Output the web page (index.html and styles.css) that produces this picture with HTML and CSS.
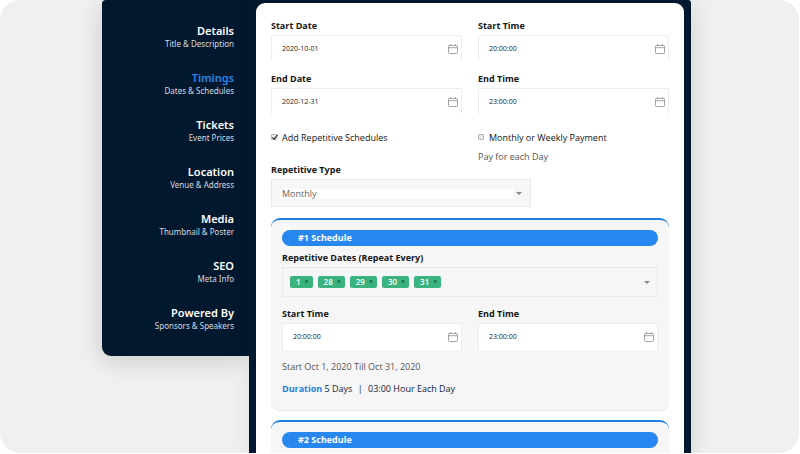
FILE: index.html
```html
<!DOCTYPE html>
<html lang="en">
<head>
<meta charset="utf-8">
<title>Event Timings</title>
<link rel="stylesheet" href="styles.css">
</head>
<body>
<svg class="sprite" aria-hidden="true">
  <symbol id="calendar" viewBox="0 0 10 10">
    <path d="M1.5 1.5h7a1 1 0 0 1 1 1v6a1 1 0 0 1-1 1h-7a1 1 0 0 1-1-1v-6a1 1 0 0 1 1-1zM.5 3.7h9M2.6 0v1.8M7.4 0v1.8" fill="none" stroke="currentColor" stroke-width=".8"/>
  </symbol>
</svg>
<div class="scene">
  <nav class="steps">
    <a href="#details" class="step"><span class="step-title">Details</span><span class="step-note">Title &amp; Description</span></a>
    <a href="#timings" class="step active"><span class="step-title">Timings</span><span class="step-note">Dates &amp; Schedules</span></a>
    <a href="#tickets" class="step"><span class="step-title">Tickets</span><span class="step-note">Event Prices</span></a>
    <a href="#location" class="step"><span class="step-title">Location</span><span class="step-note">Venue &amp; Address</span></a>
    <a href="#media" class="step"><span class="step-title">Media</span><span class="step-note">Thumbnail &amp; Poster</span></a>
    <a href="#seo" class="step"><span class="step-title">SEO</span><span class="step-note">Meta Info</span></a>
    <a href="#powered" class="step"><span class="step-title">Powered By</span><span class="step-note">Sponsors &amp; Speakers</span></a>
  </nav>
  <main class="frame">
    <form class="panel">
      <div class="pair">
        <div class="field">
          <label for="start-date">Start Date</label>
          <div class="box"><input id="start-date" type="text" value="2020-10-01"><svg class="cal"><use href="#calendar"/></svg></div>
        </div>
        <div class="field">
          <label for="start-time">Start Time</label>
          <div class="box"><input id="start-time" type="text" value="20:00:00"><svg class="cal"><use href="#calendar"/></svg></div>
        </div>
        <div class="field">
          <label for="end-date">End Date</label>
          <div class="box"><input id="end-date" type="text" value="2020-12-31"><svg class="cal"><use href="#calendar"/></svg></div>
        </div>
        <div class="field">
          <label for="end-time">End Time</label>
          <div class="box"><input id="end-time" type="text" value="23:00:00"><svg class="cal"><use href="#calendar"/></svg></div>
        </div>
      </div>
      <div class="pair options">
        <label class="check"><input type="checkbox" checked>Add Repetitive Schedules</label>
        <div>
          <label class="check"><input type="checkbox">Monthly or Weekly Payment</label>
          <p class="hint">Pay for each Day</p>
        </div>
      </div>
      <div class="field type">
        <label for="type">Repetitive Type</label>
        <div class="select-box"><select id="type"><option>Monthly</option></select></div>
      </div>
      <section class="card">
        <h2>#1 Schedule</h2>
        <div class="field">
          <label id="dates-label">Repetitive Dates (Repeat Every)</label>
          <div class="tags" role="group" aria-labelledby="dates-label">
            <span class="tag">1<button type="button" aria-label="Remove 1">×</button></span>
            <span class="tag">28<button type="button" aria-label="Remove 28">×</button></span>
            <span class="tag">29<button type="button" aria-label="Remove 29">×</button></span>
            <span class="tag">30<button type="button" aria-label="Remove 30">×</button></span>
            <span class="tag">31<button type="button" aria-label="Remove 31">×</button></span>
          </div>
        </div>
        <div class="pair times">
          <div class="field">
            <label for="s1-start">Start Time</label>
            <div class="box"><input id="s1-start" type="text" value="20:00:00"><svg class="cal"><use href="#calendar"/></svg></div>
          </div>
          <div class="field">
            <label for="s1-end">End Time</label>
            <div class="box"><input id="s1-end" type="text" value="23:00:00"><svg class="cal"><use href="#calendar"/></svg></div>
          </div>
        </div>
        <p class="range">Start Oct 1, 2020 Till Oct 31, 2020</p>
        <p class="summary"><strong>Duration</strong> 5 Days <span class="bar">|</span> 03:00 Hour Each Day</p>
      </section>
      <section class="card">
        <h2>#2 Schedule</h2>
      </section>
    </form>
  </main>
</div>
</body>
</html>
```
FILE: styles.css
```css
* { box-sizing: border-box; }
body {
  margin: 0;
  background: #fff;
  color: #151515;
  font: 9px/14px "Open Sans", sans-serif;
}
p, h2 { margin: 0; }
.sprite { display: none; }
.scene {
  display: flex;
  align-items: flex-start;
  height: calc(100vh - 1px);
  margin-right: 1px;
  padding: 0 108px 0 102px;
  overflow: hidden;
  border-radius: 20px;
  background: #f0f0f0;
}
.steps {
  display: flex;
  flex: 0 0 147px;
  flex-direction: column;
  gap: 21px;
  padding: 23px 15px 25px 0;
  border-radius: 4px 0 0 9px;
  background: #02182e;
  box-shadow: -2px 6px 22px rgba(0, 0, 0, .14);
  font-family: "Noto Sans", sans-serif;
  text-align: right;
}
.step { color: #fff; text-decoration: none; }
.step-title {
  display: block;
  font-size: 11px;
  font-weight: 600;
  line-height: 15px;
}
.active .step-title { color: #2b86e8; }
.step-note {
  display: block;
  color: #d5dbe2;
  font-size: 8px;
  line-height: 11px;
}
.frame {
  flex: 1;
  height: 100%;
  padding: 3px 7px 0;
  border-radius: 0 3px 0 0;
  background: #02182e;
  box-shadow: 4px 6px 22px rgba(0, 0, 0, .1);
}
.panel {
  height: 100%;
  padding: 16px 15px 0;
  overflow: hidden;
  border-radius: 9px 9px 0 0;
  background: #fff;
}
.pair {
  display: grid;
  grid-template-columns: 1fr 1fr;
  gap: 11px 16px;
}
.field > label {
  display: block;
  margin-bottom: 2px;
  font-weight: 700;
}
.box {
  display: flex;
  align-items: center;
  height: 26px;
  padding-right: 3px;
  border: 1px solid #ededed;
  border-bottom: 0;
  border-radius: 2px 2px 0 0;
  background: #fff;
}
.box input {
  flex: 1;
  min-width: 0;
  padding: 0 0 0 10px;
  border: 0;
  background: none;
  color: #222;
  font: 7px/14px "Open Sans", sans-serif;
}
.cal { width: 10px; height: 10px; color: #8c8c8c; }
.options { margin-top: 17px; height: 32px; }
.check { display: flex; gap: 5px; align-items: flex-start; }
.check input {
  appearance: none;
  width: 6px;
  height: 6px;
  margin: 3px 0 0;
  border: 1px solid #b5b5b5;
  border-radius: 1px;
  background: #e9e9e9;
}
.check input:checked::before {
  content: "";
  display: block;
  width: 5px;
  height: 2px;
  border: solid #222;
  border-width: 0 0 1px 1px;
  transform: rotate(-50deg);
}
.hint { margin-top: 5px; color: #555; }
.type { width: 260px; }
.select-box {
  position: relative;
  height: 28px;
  padding: 9px 16px 8px 8px;
  border: 1px solid #e9e9e9;
  background: #f7f7f7;
}
.select-box select {
  appearance: none;
  display: block;
  width: 100%;
  height: 10px;
  padding: 0 2px;
  border: 0;
  background: #fff;
  color: #666;
  font: 9px/10px "Open Sans", sans-serif;
}
.select-box::after, .tags::after {
  content: "";
  width: 0;
  height: 0;
  border: 3px solid transparent;
  border-top-color: #888;
  border-bottom: 0;
}
.select-box::after { position: absolute; top: 12px; right: 8px; }
.card {
  margin-top: 11px;
  padding: 10px 11px 14px;
  border-top: 2px solid #1f7fe0;
  border-radius: 9px;
  background: #f6f6f6;
  box-shadow: 0 1px 1px rgba(0, 0, 0, .1);
}
.card + .card { margin-top: 10px; padding-bottom: 60px; }
.card h2 {
  margin-bottom: 5px;
  padding: 0 16px;
  border-radius: 8px;
  background: #2787ee;
  color: #fff;
  font-size: 9px;
  line-height: 16px;
}
.tags {
  display: flex;
  gap: 5px;
  align-items: center;
  height: 30px;
  padding: 0 7px;
  border: 1px solid #e9e9e9;
}
.tags::after { margin-left: auto; }
.tag {
  display: flex;
  gap: 4px;
  padding: 0 4px 0 6px;
  border-radius: 2px;
  background: #3bb37e;
  color: #fff;
  font-size: 8px;
  font-weight: 600;
  line-height: 12px;
}
.tag button {
  padding: 0;
  border: 0;
  background: none;
  color: #17593b;
  font: 700 7px/12px "Open Sans", sans-serif;
}
.times { margin-top: 10px; }
.times .box { height: 27px; }
.range { margin-top: 10px; color: #555; }
.summary { margin-top: 8px; color: #14233c; }
.summary strong { color: #2381e2; }
.bar { margin: 0 3px; }
```
